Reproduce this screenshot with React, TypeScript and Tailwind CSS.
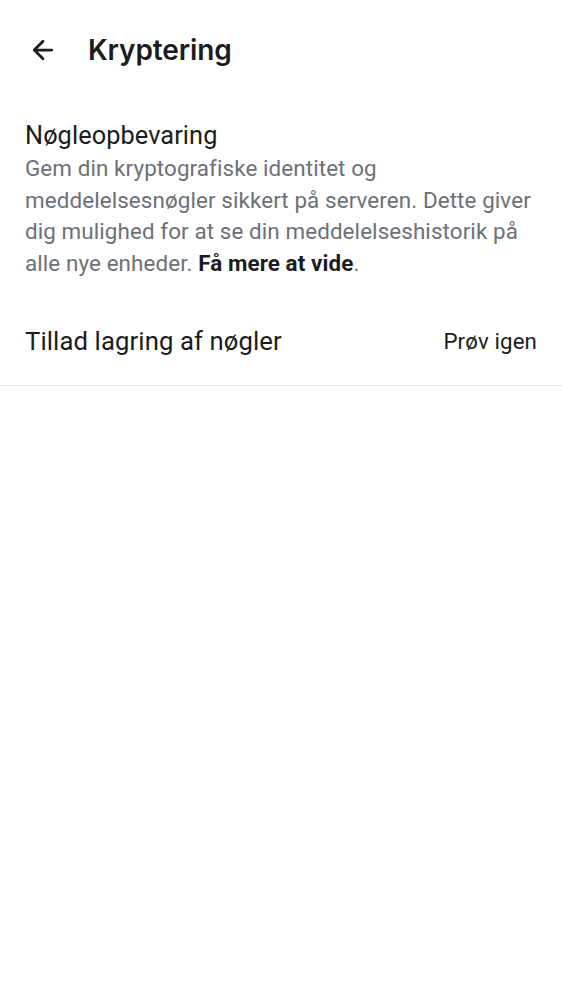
import React from 'react';
import { ArrowLeft } from 'lucide-react';

export default function App() {
  return (
    <div className="min-h-screen bg-white font-['Roboto',sans-serif] text-[#1b1c20]">
      {/* Header */}
      <div className="flex items-center h-[100px] px-[28px] gap-[30px]">
        <ArrowLeft className="w-[30px] h-[30px] text-[#1b1c20]" strokeWidth={2.2} />
        <h1 className="font-['Inter',sans-serif] font-semibold text-[28px] tracking-[-0.1px]">Kryptering</h1>
      </div>

      {/* Key storage */}
      <div className="px-[25px] pt-[20px]">
        <h2 className="text-[25.3px] leading-[32px] tracking-[0.1px]">Nøgleopbevaring</h2>
        <p className="text-[22.4px] leading-[31.5px] text-[#6b7079] tracking-[0.1px] pt-[1px]">
          Gem din kryptografiske identitet og meddelelsesnøgler sikkert på serveren. Dette giver dig mulighed for at se din meddelelseshistorik på alle nye enheder.{' '}
          <a className="font-bold text-[#1b1c20]">Få mere at vide</a>.
        </p>
      </div>

      <div className="mt-[19px] flex items-center justify-between px-[25px] h-[88px] border-b border-[#e8e9ee]">
        <span className="text-[25.7px] tracking-[0.1px]">Tillad lagring af nøgler</span>
        <span className="text-[22.3px] tracking-[0.1px]">Prøv igen</span>
      </div>
    </div>
  );
}
